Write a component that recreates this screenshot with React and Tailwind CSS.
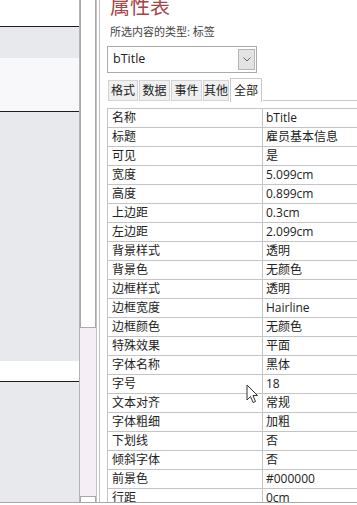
const ROWS = [
  ['名称', 'bTitle'],
  ['标题', '雇员基本信息'],
  ['可见', '是'],
  ['宽度', '5.099cm'],
  ['高度', '0.899cm'],
  ['上边距', '0.3cm'],
  ['左边距', '2.099cm'],
  ['背景样式', '透明'],
  ['背景色', '无颜色'],
  ['边框样式', '透明'],
  ['边框宽度', 'Hairline'],
  ['边框颜色', '无颜色'],
  ['特殊效果', '平面'],
  ['字体名称', '黑体'],
  ['字号', '18'],
  ['文本对齐', '常规'],
  ['字体粗细', '加粗'],
  ['下划线', '否'],
  ['倾斜字体', '否'],
  ['前景色', '#000000'],
  ['行距', '0cm'],
]

const TABS = [
  { label: '格式', w: 'w-[30px]' },
  { label: '数据', w: 'w-[31px]' },
  { label: '事件', w: 'w-[31px]' },
  { label: '其他', w: 'w-[26px]' },
]

const FONT = { fontFamily: '"Open Sans", "Noto Sans CJK SC", sans-serif' }

function Cursor() {
  return (
    <svg className="absolute left-[246px] top-[384px]" width="13" height="20" viewBox="0 0 13 20">
      <path
        d="M1 1 L1 16 L4.5 12.5 L7 18.5 L9.5 17.5 L7 11.5 L11.5 11.5 Z"
        fill="#fff"
        stroke="#333"
        strokeWidth="1"
        strokeLinejoin="round"
      />
    </svg>
  )
}

export default function App() {
  return (
    <div className="relative flex h-[505px] w-[357px] flex-col overflow-hidden bg-white" style={FONT}>
      <div className="flex h-[502px] shrink-0 overflow-hidden">
        {/* Form design surface */}
        <div className="flex w-[80px] shrink-0 flex-col border-r border-[#b4b4b4]">
          <div className="h-[26px] bg-white" />
          <div className="h-px bg-[#1e1e1e]" />
          <div className="h-[31px] bg-[#e7e9ed]" />
          <div className="h-[53px] bg-[#f8f8fa]" />
          <div className="h-px bg-[#1e1e1e]" />
          <div className="h-[249px] bg-[#e7e9ed]" />
          <div className="h-[20px] bg-white" />
          <div className="h-px bg-[#1e1e1e]" />
          <div className="flex-1 bg-[#e7e9ed]" />
        </div>

        {/* Vertical scrollbar */}
        <div className="flex w-[16px] shrink-0 flex-col bg-[#f5eff5]">
          <div className="h-[328px] border border-t-0 border-[#a9a9a9] bg-white" />
          <div className="flex-1" />
          <div className="h-[6px] border border-b-0 border-[#a9a9a9] bg-white" />
        </div>

        {/* Splitter */}
        <div className="flex w-[8px] shrink-0">
          <div className="w-px bg-[#c3c3c3]" />
          <div className="w-[2px] bg-white" />
          <div className="w-px bg-[#c3c3c3]" />
        </div>

        {/* Property sheet */}
        <div className="min-w-0 flex-1 pl-[3px]">
          <div className="-mt-[3px] h-[20px] pl-[3px] text-[20px] leading-[20px] text-[#a3464a]">
            属性表
          </div>
          <div className="mt-[8px] h-[14px] pl-[3px] text-[11px] leading-[14px] text-[#444]">
            所选内容的类型: 标签
          </div>

          <div className="mt-[7px] flex h-[27px] w-[150px] items-center justify-between border border-[#ababab] bg-white">
            <span className="pl-[5px] text-[12.5px] text-[#222]">bTitle</span>
            <div className="mr-px flex h-[21px] w-[17px] items-center justify-center border border-[#b5b5b5] bg-[#e3e3e3]">
              <svg width="8" height="5" viewBox="0 0 8 5">
                <path d="M0.5 0.5 L4 4 L7.5 0.5" fill="none" stroke="#666" strokeWidth="1" />
              </svg>
            </div>
          </div>

          <div className="mt-[4px] flex h-[24px] items-end gap-px pl-px">
            {TABS.map((t) => (
              <div
                key={t.label}
                className={`${t.w} flex h-[21px] shrink-0 items-center justify-center border border-[#d4d4d4] bg-[#f0f0f0] text-[12px] text-[#222]`}
              >
                {t.label}
              </div>
            ))}
            <div className="relative flex h-[24px] w-[32px] shrink-0 translate-y-px items-center justify-center border border-b-0 border-[#c9c9c9] bg-white text-[12px] text-[#222]">
              全部
            </div>
            <div className="h-[21px] flex-1 border-b border-[#c9c9c9]" />
          </div>

          <div className="mt-[7px] border-t border-l border-[#c4c4c4]">
            {ROWS.map(([k, v]) => (
              <div key={k} className="flex h-[19px] border-b border-[#c4c4c4] text-[12px] leading-[18px] text-[#222]">
                <div className="w-[155px] shrink-0 border-r border-[#c4c4c4] pl-[4px]">{k}</div>
                <div className="flex-1 pl-[3px] whitespace-nowrap">{v}</div>
              </div>
            ))}
          </div>
        </div>
      </div>
      <div className="h-px shrink-0 bg-[#a8a8a8]" />
      <div className="flex-1 bg-white" />
      <Cursor />
    </div>
  )
}
